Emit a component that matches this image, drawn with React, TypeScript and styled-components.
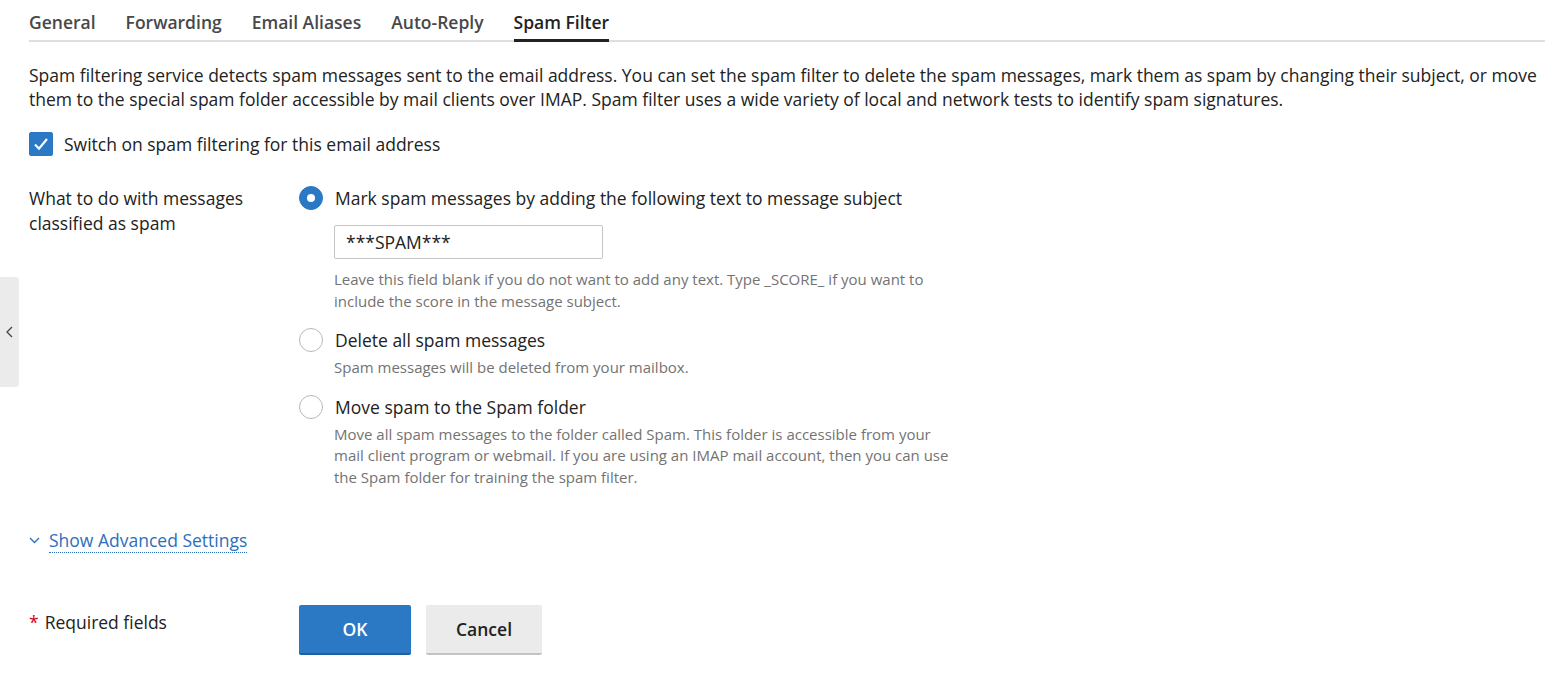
import React, { useState } from 'react'
import styled, { createGlobalStyle } from 'styled-components'

const GlobalStyle = createGlobalStyle`
	html, body {
		margin: 0;
		padding: 0;
		background: #fff;
	}
	body {
		font-family: 'Open Sans', 'Noto Sans', 'Liberation Sans', sans-serif;
		font-size: 17.5px;
		line-height: 24px;
		color: #222;
	}
	* {
		box-sizing: border-box;
	}
`

const Page = styled.div`
	padding: 0 0 40px 29px;
`

const TabList = styled.ul`
	display: flex;
	gap: 30px;
	margin: 0;
	padding: 0;
	list-style: none;
	box-shadow: inset 0 -2px 0 #dedede;
`

const Tab = styled.li<{ $active?: boolean }>`
	padding: 10px 0 5px;
	font-size: 17.5px;
	line-height: 24px;
	font-weight: 600;
	color: ${p => (p.$active ? '#222' : '#484848')};
	border-bottom: 3px solid ${p => (p.$active ? '#222' : 'transparent')};
	cursor: pointer;
`

const Intro = styled.p`
	margin: 21px 0 0;
	line-height: 24px;
`

const CheckRow = styled.label`
	display: flex;
	align-items: center;
	gap: 11px;
	margin-top: 21px;
	cursor: pointer;
`

const CheckBox = styled.span<{ $checked: boolean }>`
	display: flex;
	align-items: center;
	justify-content: center;
	width: 24px;
	height: 24px;
	border-radius: 2px;
	background: ${p => (p.$checked ? '#2b78c5' : '#fff')};
	border: 1px solid ${p => (p.$checked ? '#2b78c5' : '#b5b5b5')};
`

const FormRow = styled.div`
	display: flex;
	align-items: flex-start;
	margin-top: 30px;
`

const FieldLabel = styled.div<{ $pad?: number }>`
	flex: 0 0 270px;
	padding-top: ${p => p.$pad ?? 0}px;
	padding-right: 20px;
	line-height: 25px;
`

const FieldControls = styled.div`
	display: flex;
	flex-direction: column;
`

const Option = styled.div`
	& + & {
		margin-top: 16px;
	}
`

const OptionLabel = styled.label`
	display: flex;
	align-items: center;
	gap: 12px;
	cursor: pointer;
`

const Radio = styled.span<{ $checked: boolean }>`
	display: flex;
	align-items: center;
	justify-content: center;
	flex: 0 0 24px;
	width: 24px;
	height: 24px;
	border-radius: 50%;
	background: ${p => (p.$checked ? '#2b78c5' : '#fff')};
	border: 1px solid ${p => (p.$checked ? '#2b78c5' : '#b8b8b8')};

	&::after {
		content: '';
		display: ${p => (p.$checked ? 'block' : 'none')};
		width: 8px;
		height: 8px;
		border-radius: 50%;
		background: #fff;
	}
`

const OptionBody = styled.div`
	padding-left: 35px;
`

const TextInput = styled.input`
	display: block;
	width: 269px;
	height: 34px;
	margin-top: 15px;
	padding: 0 11px;
	border: 1px solid #c4c4c4;
	border-radius: 2px;
	font-family: inherit;
	font-size: 17.5px;
	color: #222;
	outline: none;
`

const Hint = styled.div<{ $gap?: number }>`
	max-width: 618px;
	margin-top: ${p => p.$gap ?? 5}px;
	font-size: 15px;
	line-height: 21.5px;
	color: #737373;
`

const AdvancedToggle = styled.div`
	display: flex;
	align-items: center;
	gap: 9px;
	margin-top: 40px;
	color: #2b6fbe;
	cursor: pointer;
`

const AdvancedText = styled.span`
	border-bottom: 1px dotted #2b6fbe;
	line-height: 24px;
`

const Actions = styled.div`
	display: flex;
	align-items: flex-start;
	margin-top: 52px;
`

const Required = styled.span`
	color: #d0021b;
	margin-right: 6px;
`

const ButtonGroup = styled.div`
	display: flex;
	gap: 15px;
`

const Button = styled.button<{ $primary?: boolean }>`
	height: 50px;
	min-width: ${p => (p.$primary ? '112px' : '0')};
	padding: 0 30px;
	border: 0;
	border-radius: 2px;
	border-bottom: 2px solid ${p => (p.$primary ? '#1f5f9f' : '#c3c3c3')};
	background: ${p => (p.$primary ? '#2b78c5' : '#ebebeb')};
	color: ${p => (p.$primary ? '#fff' : '#222')};
	font-family: inherit;
	font-size: 17.5px;
	font-weight: 600;
	cursor: pointer;
`

const SideHandle = styled.div`
	position: fixed;
	left: 0;
	top: 277px;
	width: 19px;
	height: 110px;
	display: flex;
	align-items: center;
	justify-content: center;
	background: #ebebeb;
	border-radius: 0 4px 4px 0;
	color: #444;
`

const tabs = ['General', 'Forwarding', 'Email Aliases', 'Auto-Reply', 'Spam Filter']

type Action = 'mark' | 'delete' | 'move'

export default function App() {
	const [enabled, setEnabled] = useState(true)
	const [action, setAction] = useState<Action>('mark')
	const [subject, setSubject] = useState('***SPAM***')

	return (
		<>
			<GlobalStyle />
			<SideHandle>
				<svg width="7" height="12" viewBox="0 0 7 12" fill="none">
					<path d="M6 1L1 6l5 5" stroke="currentColor" strokeWidth="1.3" />
				</svg>
			</SideHandle>
			<Page>
				<TabList>
					{tabs.map(t => (
						<Tab key={t} $active={t === 'Spam Filter'}>
							{t}
						</Tab>
					))}
				</TabList>

				<Intro>
					Spam filtering service detects spam messages sent to the email address. You can set the spam filter to
					delete the spam messages, mark them as spam by changing their subject, or move them to the special spam
					folder accessible by mail clients over IMAP. Spam filter uses a wide variety of local and network tests to
					identify spam signatures.
				</Intro>

				<CheckRow onClick={() => setEnabled(!enabled)}>
					<CheckBox $checked={enabled}>
						{enabled && (
							<svg width="16" height="14" viewBox="0 0 16 14" fill="none">
								<path d="M2 7.5l4 4.2L14 2" stroke="#fff" strokeWidth="2.2" />
							</svg>
						)}
					</CheckBox>
					Switch on spam filtering for this email address
				</CheckRow>

				<FormRow>
					<FieldLabel>
						What to do with messages
						<br />
						classified as spam
					</FieldLabel>
					<FieldControls>
						<Option>
							<OptionLabel onClick={() => setAction('mark')}>
								<Radio $checked={action === 'mark'} />
								Mark spam messages by adding the following text to message subject
							</OptionLabel>
							<OptionBody>
								<TextInput value={subject} onChange={e => setSubject(e.target.value)} />
								<Hint $gap={10}>
									Leave this field blank if you do not want to add any text. Type _SCORE_ if you want to
									include the score in the message subject.
								</Hint>
							</OptionBody>
						</Option>
						<Option>
							<OptionLabel onClick={() => setAction('delete')}>
								<Radio $checked={action === 'delete'} />
								Delete all spam messages
							</OptionLabel>
							<OptionBody>
								<Hint>Spam messages will be deleted from your mailbox.</Hint>
							</OptionBody>
						</Option>
						<Option>
							<OptionLabel onClick={() => setAction('move')}>
								<Radio $checked={action === 'move'} />
								Move spam to the Spam folder
							</OptionLabel>
							<OptionBody>
								<Hint>
									Move all spam messages to the folder called Spam. This folder is accessible from your mail
									client program or webmail. If you are using an IMAP mail account, then you can use the Spam
									folder for training the spam filter.
								</Hint>
							</OptionBody>
						</Option>
					</FieldControls>
				</FormRow>

				<AdvancedToggle>
					<svg width="11" height="7" viewBox="0 0 11 7" fill="none">
						<path d="M1 1l4.5 4.5L10 1" stroke="currentColor" strokeWidth="1.3" />
					</svg>
					<AdvancedText>Show Advanced Settings</AdvancedText>
				</AdvancedToggle>

				<Actions>
					<FieldLabel $pad={5}>
						<Required>*</Required>Required fields
					</FieldLabel>
					<ButtonGroup>
						<Button $primary>OK</Button>
						<Button>Cancel</Button>
					</ButtonGroup>
				</Actions>
			</Page>
		</>
	)
}
